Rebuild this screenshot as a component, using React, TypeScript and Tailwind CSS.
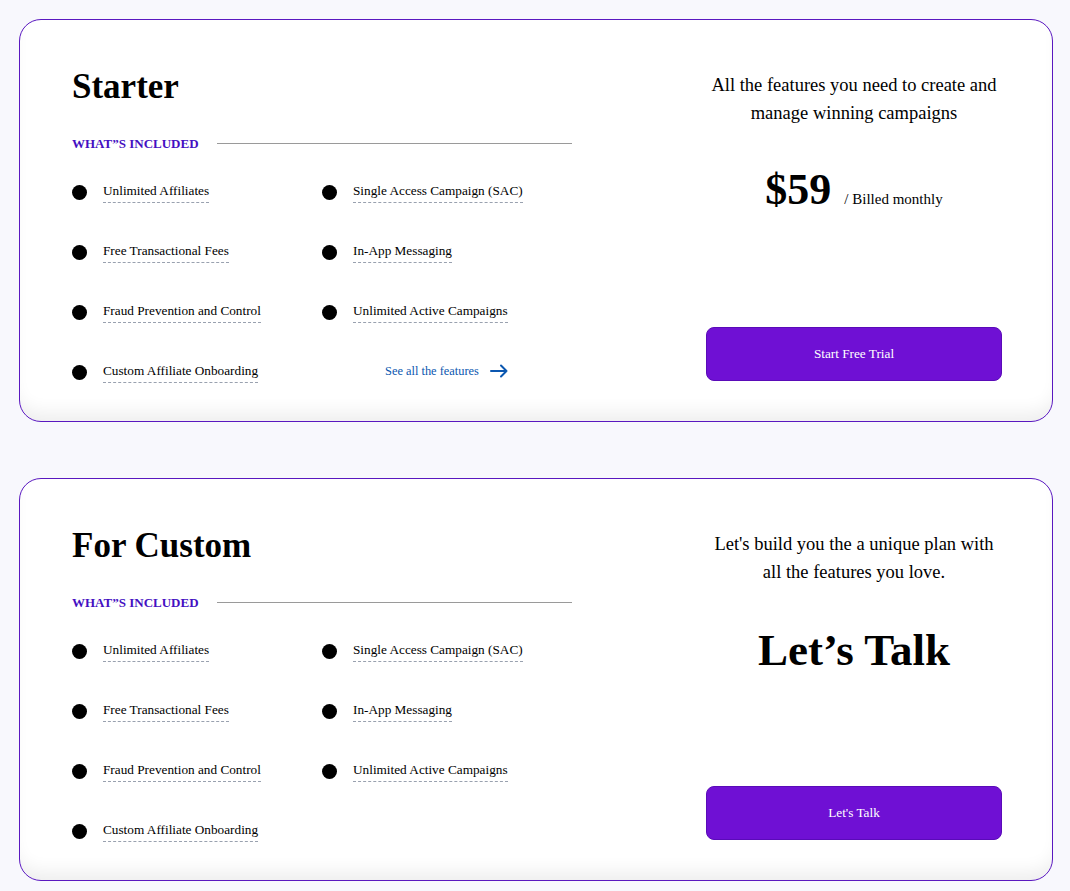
const features = [
  ['Unlimited Affiliates', 'Single Access Campaign (SAC)'],
  ['Free Transactional Fees', 'In-App Messaging'],
  ['Fraud Prevention and Control', 'Unlimited Active Campaigns'],
]

function Feature({ label }: { label: string }) {
  return (
    <div className="flex items-start">
      <span className="mt-[3px] w-[15px] h-[15px] rounded-full bg-black shrink-0" />
      <span className="ml-[16px] text-[13.25px] leading-[18px] text-black border-b border-dashed border-gray-400 pb-[2px]">
        {label}
      </span>
    </div>
  )
}

function PlanCard({
  title,
  blurb,
  price,
  cta,
  showMore,
}: {
  title: string
  blurb: React.ReactNode
  price: React.ReactNode
  cta: string
  showMore?: boolean
}) {
  return (
    <div className="bg-white border border-[#5a18c0] rounded-[22px] flex pl-[52px] pr-[50px] pt-[49px] pb-[38px] shadow-[inset_0_-16px_18px_-8px_rgba(0,0,0,0.07)]">
      {/* left: title + features */}
      <div className="w-[500px]">
        <h2 className="text-[35px] leading-none font-bold">{title}</h2>
        <div className="flex items-center mt-[33px]">
          <span className="text-[13px] font-bold text-[#4410c2] leading-none">WHAT”S INCLUDED</span>
          <span className="ml-[18px] flex-1 h-px bg-[#9a9a9a]" />
        </div>
        <div className="mt-[32px] flex flex-col gap-[39px]">
          {features.map(([a, b]) => (
            <div key={a} className="grid grid-cols-[250px_1fr]">
              <Feature label={a} />
              <Feature label={b} />
            </div>
          ))}
          <div className="grid grid-cols-[250px_1fr]">
            <Feature label="Custom Affiliate Onboarding" />
            {showMore ? (
              <a className="flex items-center h-[18px] pl-[63px] text-[12.4px] text-[#0b57b0]">
                See all the features
                <svg width="18" height="14" viewBox="0 0 18 14" className="ml-[11px]" fill="none" stroke="#0b57b0" strokeWidth="2" strokeLinecap="round" strokeLinejoin="round">
                  <path d="M1 7h15.5M11 1.5l5.5 5.5-5.5 5.5" />
                </svg>
              </a>
            ) : (
              <span />
            )}
          </div>
        </div>
      </div>

      {/* right: pricing */}
      <div className="ml-auto w-[296px] flex flex-col items-center">
        <p className="text-[18.5px] leading-[28px] text-center text-black mt-[2px]">{blurb}</p>
        {price}
        <button className="mt-auto mb-[2px] w-full h-[54px] rounded-[8px] bg-[#6f10d4] border border-[#5a0bb8] text-white text-[13.25px]">
          {cta}
        </button>
      </div>
    </div>
  )
}

export default function App() {
  return (
    <div className="min-h-screen bg-[#f8f8fd] px-[19px] pt-[19px] pb-[10px] text-black font-['Liberation_Serif','Times_New_Roman',serif]">
      <div className="w-[1034px] flex flex-col gap-[56px]">
        <PlanCard
          title="Starter"
          blurb={
            <>
              All the features you need to create and
              <br />
              manage winning campaigns
            </>
          }
          price={
            <div className="flex items-baseline mt-[41px]">
              <span className="text-[44px] font-bold leading-none">$59</span>
              <span className="ml-[13px] text-[15px]">/ Billed monthly</span>
            </div>
          }
          cta="Start Free Trial"
          showMore
        />
        <PlanCard
          title="For Custom"
          blurb={
            <>
              Let's build you the a unique plan with
              <br />
              all the features you love.
            </>
          }
          price={<div className="mt-[42px] text-[45px] font-bold leading-none">Let’s Talk</div>}
          cta="Let's Talk"
        />
      </div>
    </div>
  )
}
